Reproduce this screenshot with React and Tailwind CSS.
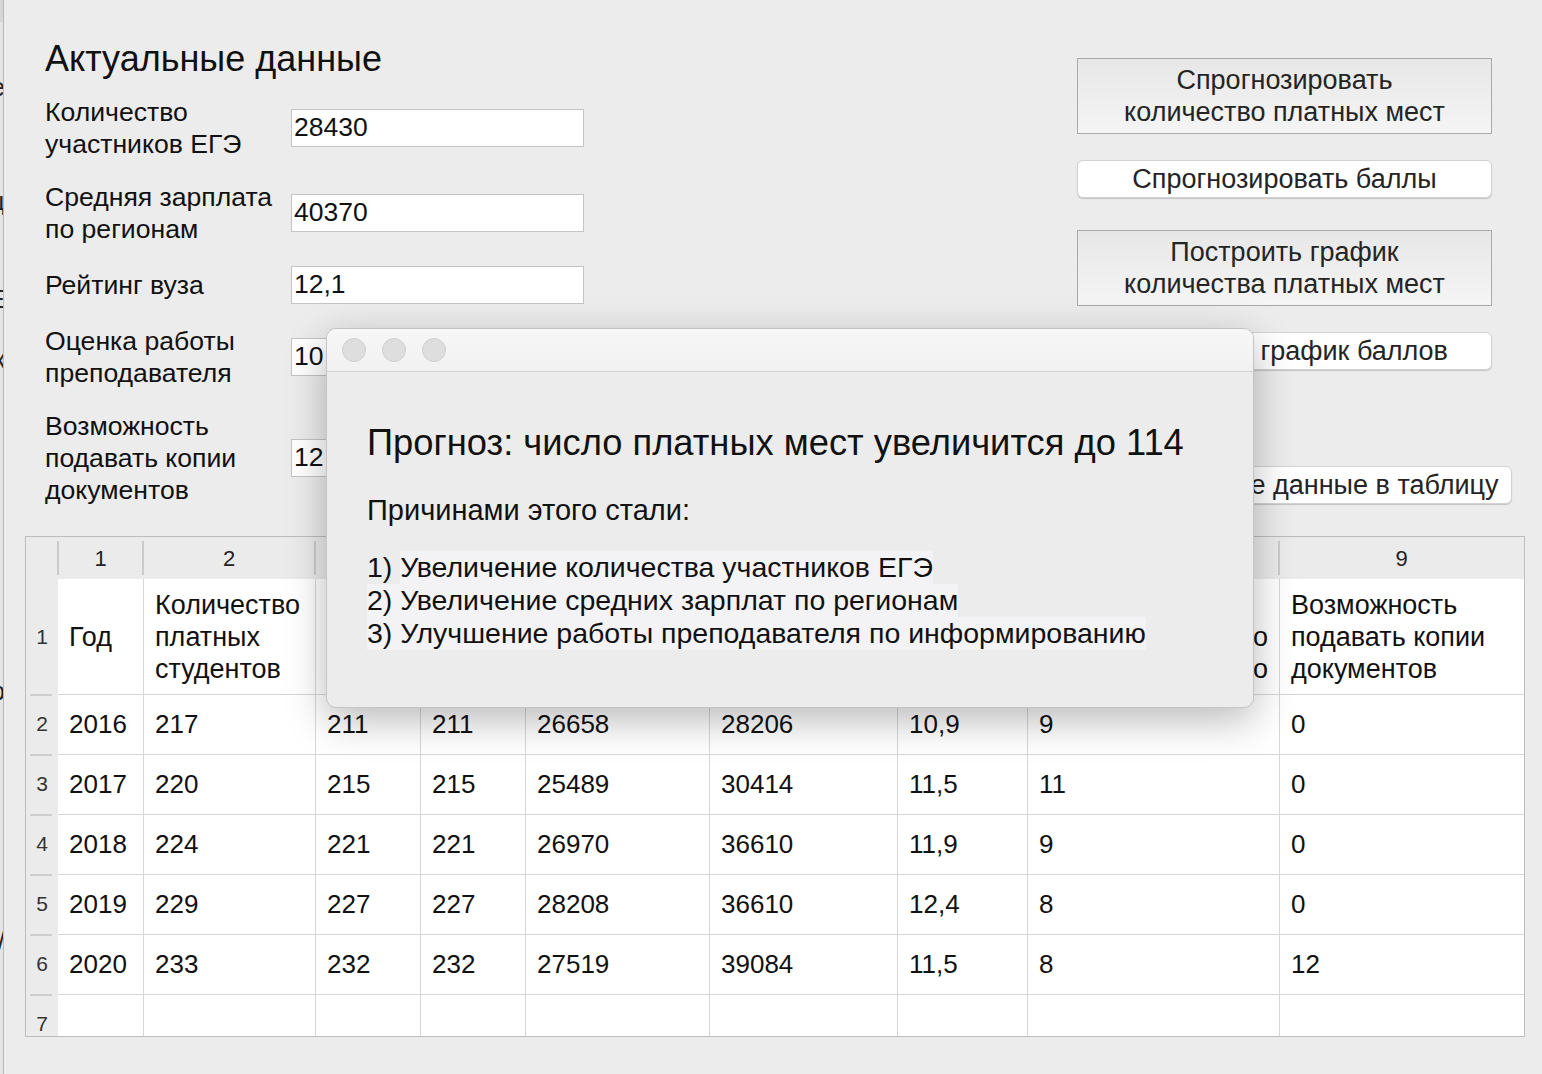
import React from "react";

const labelRows = [
  { lines: ["Количество", "участников ЕГЭ"], value: "28430" },
  { lines: ["Средняя зарплата", "по регионам"], value: "40370" },
  { lines: ["Рейтинг вуза"], value: "12,1" },
  { lines: ["Оценка работы", "преподавателя"], value: "10" },
  { lines: ["Возможность", "подавать копии", "документов"], value: "12" },
];

const colWidths = [
  "w-[85px]",
  "w-[172px]",
  "w-[105px]",
  "w-[105px]",
  "w-[184px]",
  "w-[188px]",
  "w-[130px]",
  "w-[252px]",
  "w-[245px]",
];

const data = [
  ["2016", "217", "211", "211", "26658", "28206", "10,9", "9", "0"],
  ["2017", "220", "215", "215", "25489", "30414", "11,5", "11", "0"],
  ["2018", "224", "221", "221", "26970", "36610", "11,9", "9", "0"],
  ["2019", "229", "227", "227", "28208", "36610", "12,4", "8", "0"],
  ["2020", "233", "232", "232", "27519", "39084", "11,5", "8", "12"],
  ["", "", "", "", "", "", "", "", ""],
];

const headerTitles = [
  ["Год"],
  ["Количество", "платных", "студентов"],
  [],
  [],
  [],
  [],
  [],
  null,
  ["Возможность", "подавать копии", "документов"],
];

function LeftStrip() {
  const glyphs = [
    { t: "е", y: "top-[72px]" },
    { t: "ц", y: "top-[186px]" },
    { t: "Е", y: "top-[284px]" },
    { t: "к", y: "top-[344px]" },
    { t: "р", y: "top-[676px]" },
    { t: "/", y: "top-[926px]" },
  ];
  return (
    <div className="absolute left-0 top-0 h-full w-[4px] overflow-hidden border-r border-[#b9b9b9] bg-[#e4e4e4]">
      <div className="h-[22px] w-full bg-[#d6d6d6]" />
      {glyphs.map((g, i) => (
        <span
          key={i}
          className={`absolute right-[-2px] ${g.y} text-[26px] leading-[30px] text-[#222]`}
        >
          {g.t}
        </span>
      ))}
    </div>
  );
}

function GrayButton({ lines }) {
  return (
    <div className="flex h-[76px] w-[415px] flex-col items-center justify-center border border-[#a9a9a9] bg-gradient-to-b from-[#e7e7e7] to-[#f5f5f5] text-[27px] leading-[32px] text-[#242424]">
      {lines.map((l, i) => (
        <div key={i}>{l}</div>
      ))}
    </div>
  );
}

function WhiteButton({ children, w = "w-[415px]" }) {
  return (
    <div
      className={`flex h-[38px] ${w} items-center justify-center overflow-hidden whitespace-nowrap rounded-[6px] border border-[#d2d2d2] bg-white text-[27px] leading-[32px] text-[#242424] shadow-[0_1px_1px_rgba(0,0,0,0.18)]`}
    >
      {children}
    </div>
  );
}

function Modal() {
  return (
    <div className="absolute left-[326px] top-[328px] h-[380px] w-[928px] overflow-hidden rounded-[10px] border border-[#c4c4c4] bg-[#ececec] shadow-[0_12px_40px_rgba(0,0,0,0.28)]">
      <div className="flex h-[43px] items-center gap-[16px] border-b border-[#d3d3d3] bg-gradient-to-b from-[#f7f7f7] to-[#f1f1f1] pl-[15px]">
        <div className="h-[24px] w-[24px] rounded-full border border-[#cfcfcf] bg-[#dedede]" />
        <div className="h-[24px] w-[24px] rounded-full border border-[#cfcfcf] bg-[#dedede]" />
        <div className="h-[24px] w-[24px] rounded-full border border-[#cfcfcf] bg-[#dedede]" />
      </div>
      <div className="px-[40px] pt-[51px] text-[#111]">
        <div className="whitespace-nowrap text-[36.3px] leading-[40px]">
          Прогноз: число платных мест увеличится до 114
        </div>
        <div className="mt-[30px] whitespace-nowrap text-[29px] leading-[34px]">Причинами этого стали:</div>
        <div className="mt-[24px] text-[28.5px] leading-[33px]">
          <div className="whitespace-nowrap">
            1) <span className="inline-block bg-[#f3f3f6]">Увеличение количества участников ЕГЭ</span>
          </div>
          <div className="whitespace-nowrap">
            <span className="inline-block bg-[#f3f3f6]">2) Увеличение средних зарплат по регионам</span>
          </div>
          <div className="whitespace-nowrap">
            <span className="inline-block bg-[#f3f3f6]">
              3) Улучшение работы преподавателя по информированию
            </span>
          </div>
        </div>
      </div>
    </div>
  );
}

function Table() {
  return (
    <div className="ml-[25px] h-[501px] w-[1500px] overflow-hidden border border-[#bdbdbd] bg-white">
      <div className="flex h-[42px] bg-[#ebebeb]">
        <div className="w-[32px] shrink-0" />
        {colWidths.map((w, i) => (
          <div key={i} className={`relative flex ${w} shrink-0 items-center justify-center text-[22px] text-[#222]`}>
            <div className="absolute left-[-1px] top-[4px] h-[34px] w-[2px] bg-[#cbcbcb]" />
            {i === 0 || i === 1 || i === 8 ? i + 1 : ""}
          </div>
        ))}
      </div>
      <div className="flex h-[115px]">
        <div className="flex w-[32px] shrink-0 items-center justify-center bg-[#ebebeb] text-[21px] text-[#333]">
          1
        </div>
        {colWidths.map((w, i) => {
          const t = headerTitles[i];
          return (
            <div
              key={i}
              className={`flex ${w} shrink-0 flex-col justify-center overflow-hidden whitespace-nowrap px-[11px] text-[27px] leading-[32px] text-[#111] ${
                i > 0 ? "border-l border-[#d6d6d6]" : ""
              }`}
            >
              {t ? (
                t.map((l, k) => <div key={k}>{l}</div>)
              ) : (
                <>
                  <div>&nbsp;</div>
                  <div className="text-right">о</div>
                  <div className="text-right">о</div>
                </>
              )}
            </div>
          );
        })}
      </div>
      {data.map((row, r) => (
        <div key={r} className="flex h-[60px] shrink-0">
          <div className="relative flex w-[32px] shrink-0 items-center justify-center bg-[#ebebeb] text-[21px] text-[#333]">
            <div className="absolute left-[4px] top-0 h-[2px] w-[22px] bg-[#cdcdcd]" />
            {r + 2}
          </div>
          {row.map((v, c) => (
            <div
              key={c}
              className={`flex ${colWidths[c]} shrink-0 items-center border-t border-[#d6d6d6] px-[11px] text-[26px] text-[#111] ${
                c > 0 ? "border-l" : ""
              }`}
            >
              {v}
            </div>
          ))}
        </div>
      ))}
    </div>
  );
}

export default function App() {
  return (
    <div className="relative h-[1074px] w-[1542px] overflow-hidden bg-[#ececec] font-['Liberation_Sans',Arial,sans-serif] text-[#111]">
      <LeftStrip />
      <div className="flex h-[536px]">
        <div className="w-[1077px] shrink-0 pl-[45px] pt-[41px]">
          <div className="text-[36px] leading-[36px] text-[#111]">Актуальные данные</div>
          <div className="mt-[19px] flex flex-col gap-[21px]">
            {labelRows.map((row, i) => (
              <div key={i} className="flex items-center">
                <div className="w-[246px] shrink-0 whitespace-nowrap text-[26.6px] leading-[32px] text-[#111]">
                  {row.lines.map((l, k) => (
                    <div key={k}>{l}</div>
                  ))}
                </div>
                <div className="flex h-[38px] w-[293px] items-center overflow-hidden border border-[#c4c4c4] bg-white pl-[2px] text-[26.5px] text-[#111]">
                  {row.value}
                </div>
              </div>
            ))}
          </div>
        </div>
        <div className="flex flex-col pt-[58px]">
          <GrayButton lines={["Спрогнозировать", "количество платных мест"]} />
          <div className="mt-[26px]">
            <WhiteButton>Спрогнозировать баллы</WhiteButton>
          </div>
          <div className="mt-[32px]">
            <GrayButton lines={["Построить график", "количества платных мест"]} />
          </div>
          <div className="mt-[26px]">
            <WhiteButton>Построить график баллов</WhiteButton>
          </div>
          <div className="mt-[96px]">
            <WhiteButton w="w-[435px]">Внести новые данные в таблицу</WhiteButton>
          </div>
        </div>
      </div>
      <Table />
      <Modal />
    </div>
  );
}
